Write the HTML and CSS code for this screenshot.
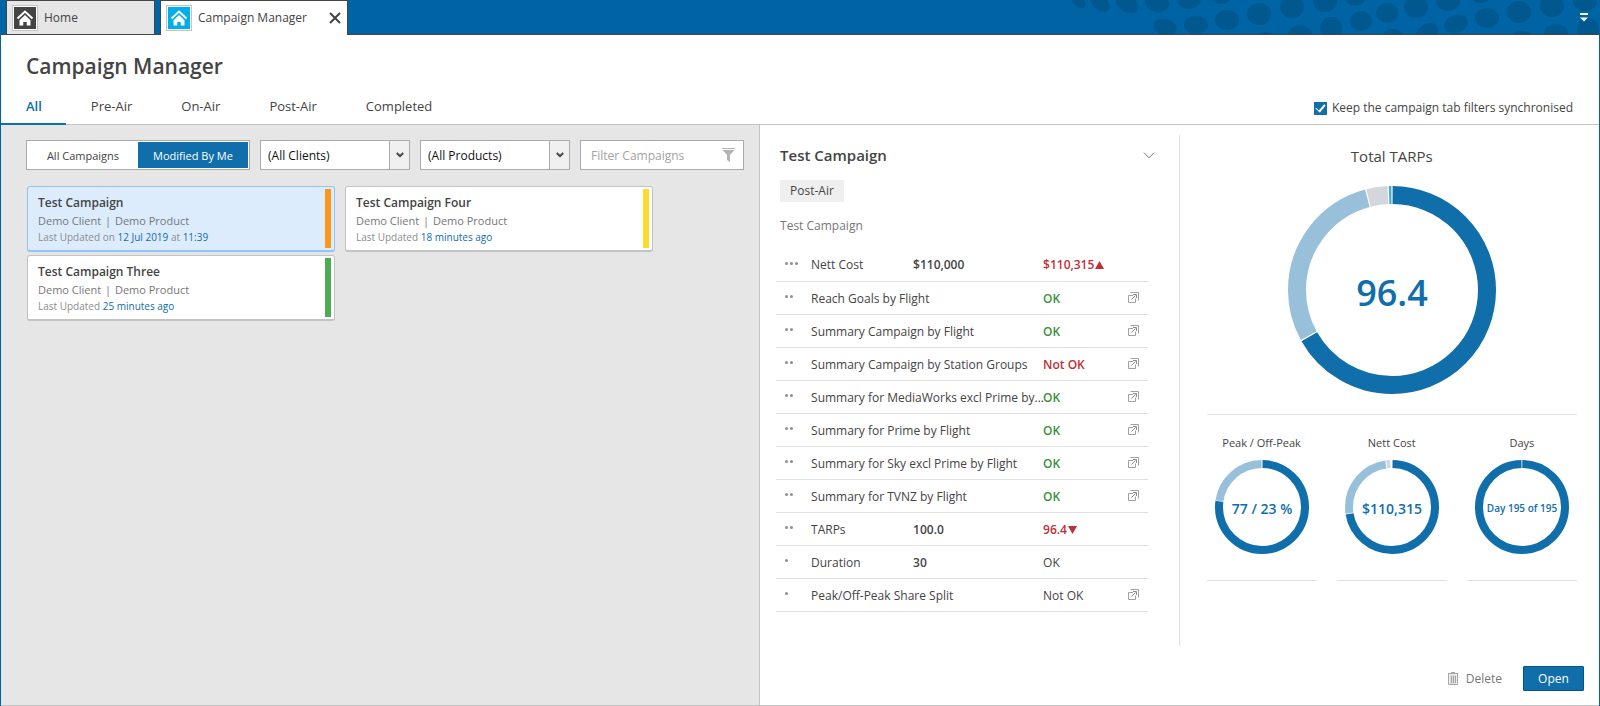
FILE: index.html
```html
<!DOCTYPE html>
<html lang="en">
<head>
  <meta charset="UTF-8">
  <meta name="viewport" content="width=device-width, initial-scale=1.0">
  <title>Campaign Manager</title>
  <link rel="stylesheet" href="styles.css">
</head>
<body>
  <svg class="sprite" aria-hidden="true">
    <symbol id="house" viewBox="0 0 22 22">
      <path d="M3.5 11.5 L11 4.5 L18.500 11.5" fill="none" stroke="#fff" stroke-width="2"/>
      <path d="M11 8 L16.5 13.2 V18.5 H12.7 V15 H9.3 V18.5 H5.5 V13.2 Z" fill="#fff"/>
    </symbol>
    <symbol id="popout" viewBox="0 0 11 11">
      <path d="M2.500 .5H10.5V8.500M5 3.5H.5V10.5H7.5V6.5" fill="none" stroke="#a0a0a0"/>
      <path d="M3.500 7.5L7.500 3.500M5 2.500H8.500V6" fill="none" stroke="#8c8c8c"/>
    </symbol>
    <symbol id="arrow" viewBox="0 0 8 6">
      <path d="M.8 1 L4 4.2 L7.2 1" fill="none" stroke="#444" stroke-width="2"/>
    </symbol>
  </svg>

  <header class="topbar">
    <svg class="dots" width="540" height="34" viewBox="1060 0 540 34" aria-hidden="true">
      <g fill="#00588f">
        <ellipse cx="1078" cy="1" rx="9" ry="5" transform="rotate(40 1078 1)"/>
        <ellipse cx="1100" cy="3" rx="11" ry="7" transform="rotate(40 1100 3)"/>
        <ellipse cx="1127" cy="4" rx="12" ry="8" transform="rotate(30 1127 4)"/>
        <ellipse cx="1157" cy="3" rx="12" ry="9" transform="rotate(15 1157 3)"/>
        <ellipse cx="1189" cy="-1" rx="12" ry="10"/>
        <ellipse cx="1221" cy="-5" rx="11" ry="9"/>
        <ellipse cx="1165" cy="27" rx="12" ry="8" transform="rotate(15 1165 27)"/>
        <ellipse cx="1196" cy="25" rx="12" ry="9"/>
        <ellipse cx="1227" cy="20" rx="12" ry="10"/>
        <ellipse cx="1259" cy="14" rx="12" ry="11"/>
        <ellipse cx="1292" cy="7" rx="12" ry="11"/>
        <ellipse cx="1325" cy="1" rx="12" ry="11"/>
        <ellipse cx="1355" cy="-4" rx="11" ry="10"/>
        <ellipse cx="1266" cy="40" rx="11" ry="8"/>
        <ellipse cx="1300" cy="35" rx="12" ry="10"/>
        <ellipse cx="1331" cy="28" rx="11" ry="11"/>
        <ellipse cx="1361" cy="21" rx="11" ry="10"/>
        <ellipse cx="1387" cy="13" rx="11" ry="10"/>
        <ellipse cx="1416" cy="7" rx="12" ry="11"/>
        <ellipse cx="1448" cy="1" rx="12" ry="10"/>
        <ellipse cx="1481" cy="-7" rx="12" ry="10"/>
        <ellipse cx="1393" cy="37" rx="10" ry="8"/>
        <ellipse cx="1427" cy="33" rx="12" ry="9" transform="rotate(-35 1427 33)"/>
        <ellipse cx="1456" cy="24" rx="12" ry="9" transform="rotate(-20 1456 24)"/>
        <ellipse cx="1487" cy="18" rx="12" ry="10"/>
        <ellipse cx="1519" cy="12" rx="12" ry="11"/>
        <ellipse cx="1552" cy="6" rx="12" ry="11"/>
        <ellipse cx="1585" cy="1" rx="12" ry="10"/>
        <ellipse cx="1522" cy="39" rx="11" ry="8"/>
        <ellipse cx="1556" cy="34" rx="12" ry="10"/>
        <ellipse cx="1588" cy="29" rx="11" ry="11"/>
      </g>
    </svg>
    <div class="window-tab">
      <span class="tab-icon"><svg width="22" height="22"><use href="#house"/></svg></span>
      <a href="#">Home</a>
    </div>
    <div class="window-tab current">
      <span class="tab-icon"><svg width="22" height="22"><use href="#house"/></svg></span>
      <a href="#">Campaign Manager</a>
      <button class="close" aria-label="Close tab">
        <svg width="12" height="12" viewBox="0 0 12 12"><path d="M1 1L11 11M11 1L1 11" stroke="#444" stroke-width="2"/></svg>
      </button>
    </div>
    <button class="overflow" aria-label="More tabs">
      <svg width="8" height="9" viewBox="0 0 8 9"><path d="M0 0H8V2H0zM0 4.5H8L4 8.5z" fill="#fff"/></svg>
    </button>
  </header>

  <main class="window">
    <div class="heading">
      <h1>Campaign Manager</h1>
      <div class="nav-row">
        <nav class="tabs">
          <a class="active" href="#">All</a>
          <a href="#">Pre-Air</a>
          <a href="#">On-Air</a>
          <a href="#">Post-Air</a>
          <a href="#">Completed</a>
        </nav>
        <label class="sync"><input type="checkbox" checked>Keep the campaign tab filters synchronised</label>
      </div>
    </div>

    <div class="content">
      <section class="list">
        <div class="filters">
          <div class="toggle">
            <button>All Campaigns</button>
            <button class="on">Modified By Me</button>
          </div>
          <div class="select">
            <select aria-label="Clients"><option>(All Clients)</option></select>
            <span class="select-arrow"><svg width="8" height="6"><use href="#arrow"/></svg></span>
          </div>
          <div class="select">
            <select aria-label="Products"><option>(All Products)</option></select>
            <span class="select-arrow"><svg width="8" height="6"><use href="#arrow"/></svg></span>
          </div>
          <div class="search">
            <input type="text" placeholder="Filter Campaigns" aria-label="Filter campaigns">
            <svg width="13" height="14" viewBox="0 0 13 14"><path d="M0 0H13V1H0zM.5 2H12.5L8 7V14L5 12V7z" fill="#b4b4b4"/></svg>
          </div>
        </div>

        <div class="cards">
          <article class="card selected">
            <div class="card-text">
              <h2>Test Campaign</h2>
              <p class="client">Demo Client <i>|</i> Demo Product</p>
              <p class="updated">Last Updated on <b>12 Jul 2019</b> at <b>11:39</b></p>
            </div>
            <span class="stripe orange"></span>
          </article>
          <article class="card">
            <div class="card-text">
              <h2>Test Campaign Four</h2>
              <p class="client">Demo Client <i>|</i> Demo Product</p>
              <p class="updated">Last Updated <b>18 minutes ago</b></p>
            </div>
            <span class="stripe yellow"></span>
          </article>
          <article class="card">
            <div class="card-text">
              <h2>Test Campaign Three</h2>
              <p class="client">Demo Client <i>|</i> Demo Product</p>
              <p class="updated">Last Updated <b>25 minutes ago</b></p>
            </div>
            <span class="stripe green"></span>
          </article>
        </div>
      </section>

      <section class="side">
        <div class="panels">
          <div class="detail">
            <div class="detail-head">
              <h2>Test Campaign</h2>
              <button class="collapse" aria-label="Collapse">
                <svg width="12" height="7" viewBox="0 0 12 7"><path d="M1 .7L6 5.8L11 .7" fill="none" stroke="#777"/></svg>
              </button>
            </div>
            <span class="tag">Post-Air</span>
            <p class="description">Test Campaign</p>

            <table class="goals">
              <colgroup>
                <col class="col-priority"><col class="col-name"><col class="col-goal"><col><col class="col-link">
              </colgroup>
              <tr>
                <td><span class="priority"><i></i><i></i><i></i></span></td>
                <td>Nett Cost</td><td class="goal">$110,000</td>
                <td class="bad">$110,315<svg width="9" height="8" viewBox="0 0 9 8"><path d="M4.5 0L9 8H0z" fill="#bf2f38"/></svg></td>
                <td></td>
              </tr>
              <tr>
                <td><span class="priority"><i></i><i></i></span></td>
                <td colspan="2">Reach Goals by Flight</td><td class="good">OK</td>
                <td><a href="#" aria-label="Open"><svg width="11" height="11"><use href="#popout"/></svg></a></td>
              </tr>
              <tr>
                <td><span class="priority"><i></i><i></i></span></td>
                <td colspan="2">Summary Campaign by Flight</td><td class="good">OK</td>
                <td><a href="#" aria-label="Open"><svg width="11" height="11"><use href="#popout"/></svg></a></td>
              </tr>
              <tr>
                <td><span class="priority"><i></i><i></i></span></td>
                <td colspan="2">Summary Campaign by Station Groups</td><td class="bad">Not OK</td>
                <td><a href="#" aria-label="Open"><svg width="11" height="11"><use href="#popout"/></svg></a></td>
              </tr>
              <tr>
                <td><span class="priority"><i></i><i></i></span></td>
                <td colspan="2">Summary for MediaWorks excl Prime by...</td><td class="good">OK</td>
                <td><a href="#" aria-label="Open"><svg width="11" height="11"><use href="#popout"/></svg></a></td>
              </tr>
              <tr>
                <td><span class="priority"><i></i><i></i></span></td>
                <td colspan="2">Summary for Prime by Flight</td><td class="good">OK</td>
                <td><a href="#" aria-label="Open"><svg width="11" height="11"><use href="#popout"/></svg></a></td>
              </tr>
              <tr>
                <td><span class="priority"><i></i><i></i></span></td>
                <td colspan="2">Summary for Sky excl Prime by Flight</td><td class="good">OK</td>
                <td><a href="#" aria-label="Open"><svg width="11" height="11"><use href="#popout"/></svg></a></td>
              </tr>
              <tr>
                <td><span class="priority"><i></i><i></i></span></td>
                <td colspan="2">Summary for TVNZ by Flight</td><td class="good">OK</td>
                <td><a href="#" aria-label="Open"><svg width="11" height="11"><use href="#popout"/></svg></a></td>
              </tr>
              <tr>
                <td><span class="priority"><i></i><i></i></span></td>
                <td>TARPs</td><td class="goal">100.0</td>
                <td class="bad">96.4<svg width="9" height="8" viewBox="0 0 9 8"><path d="M0 0H9L4.5 8z" fill="#bf2f38"/></svg></td>
                <td></td>
              </tr>
              <tr>
                <td><span class="priority"><i></i></span></td>
                <td>Duration</td><td class="goal">30</td><td>OK</td><td></td>
              </tr>
              <tr>
                <td><span class="priority"><i></i></span></td>
                <td colspan="2">Peak/Off-Peak Share Split</td><td>Not OK</td>
                <td><a href="#" aria-label="Open"><svg width="11" height="11"><use href="#popout"/></svg></a></td>
              </tr>
            </table>
          </div>

          <div class="charts">
            <div class="total">
              <h3>Total TARPs</h3>
              <svg class="donut big" width="208" height="208" viewBox="0 0 208 208">
                <g transform="rotate(-90 104 104)">
                  <circle class="dark" cx="104" cy="104" r="95" pathLength="1000" stroke-dasharray="667 333" stroke-dashoffset="-1"/>
                  <circle class="light" cx="104" cy="104" r="95" pathLength="1000" stroke-dasharray="288 712" stroke-dashoffset="-670"/>
                  <circle class="grey" cx="104" cy="104" r="95" pathLength="1000" stroke-dasharray="33 967" stroke-dashoffset="-960"/>
                  <circle class="cyan" cx="104" cy="104" r="95" pathLength="1000" stroke-dasharray="4 996" stroke-dashoffset="-995"/>
                </g>
                <text x="104" y="120">96.4</text>
              </svg>
            </div>
            <div class="small-charts">
              <div class="small-chart">
                <h4>Peak / Off-Peak</h4>
                <svg class="donut" width="94" height="94" viewBox="0 0 94 94">
                  <g transform="rotate(-90 47 47)">
                    <circle class="dark" cx="47" cy="47" r="43" pathLength="1000" stroke-dasharray="769 231" stroke-dashoffset="-2"/>
                    <circle class="light" cx="47" cy="47" r="43" pathLength="1000" stroke-dasharray="225 775" stroke-dashoffset="-773"/>
                  </g>
                  <text x="47" y="54">77 / 23 %</text>
                </svg>
              </div>
              <div class="small-chart">
                <h4>Nett Cost</h4>
                <svg class="donut" width="94" height="94" viewBox="0 0 94 94">
                  <g transform="rotate(-90 47 47)">
                    <circle class="dark" cx="47" cy="47" r="43" pathLength="1000" stroke-dasharray="722 278" stroke-dashoffset="-2"/>
                    <circle class="light" cx="47" cy="47" r="43" pathLength="1000" stroke-dasharray="250 750" stroke-dashoffset="-727"/>
                    <circle class="grey" cx="47" cy="47" r="43" pathLength="1000" stroke-dasharray="14 986" stroke-dashoffset="-980"/>
                  </g>
                  <text x="47" y="54">$110,315</text>
                </svg>
              </div>
              <div class="small-chart">
                <h4>Days</h4>
                <svg class="donut fine" width="94" height="94" viewBox="0 0 94 94">
                  <g transform="rotate(-90 47 47)">
                    <circle class="dark" cx="47" cy="47" r="43" pathLength="1000" stroke-dasharray="997 3" stroke-dashoffset="-1"/>
                  </g>
                  <text x="47" y="52">Day 195 of 195</text>
                </svg>
              </div>
            </div>
          </div>
        </div>

        <footer class="actions">
          <button class="delete">
            <svg width="10" height="13" viewBox="0 0 10 13">
              <path d="M1.500 2.500H8.500V12.500H1.500z" fill="#ddd"/>
              <path d="M0 1.500H10M3 .5H7M.5 2V12.500H9.500V2M3.500 4V11M5.500 4V11M7.500 4V11" fill="none" stroke="#a6a6a6"/>
            </svg>
            Delete
          </button>
          <button class="open">Open</button>
        </footer>
      </section>
    </div>
  </main>
</body>
</html>
```
FILE: styles.css
```css
* {
    box-sizing: border-box;
}

body {
    margin: 0;
    min-height: 100vh;
    display: flex;
    flex-direction: column;
    font-family: "Open Sans", "Noto Sans", sans-serif;
    font-size: 12px;
    line-height: 16px;
    color: #444;
    background-color: #0063a3;
}

h1, h2, h3, h4, p {
    margin: 0;
}

button, input, select {
    font: inherit;
    color: inherit;
}

button {
    padding: 0;
    border: 0;
    background: none;
    cursor: pointer;
}

a {
    color: inherit;
    text-decoration: none;
}

svg {
    display: block;
    flex: none;
}

.sprite {
    position: absolute;
    width: 0;
    height: 0;
}

/* window tabs */
.topbar {
    position: relative;
    display: flex;
    height: 34px;
    padding: 0 12px 0 6px;
    gap: 5px;
}

.dots {
    position: absolute;
    top: 0;
    right: 0;
}

.window-tab {
    display: flex;
    align-items: center;
    gap: 6px;
    width: 149px;
    padding-left: 5px;
    background-color: #e6e6e6;
    border: 1px solid #444;
    border-bottom: 0;
}

.window-tab.current {
    width: 188px;
    padding-right: 6px;
    margin-bottom: -1px;
    background-color: #fff;
    z-index: 1;
}

.tab-icon {
    padding: 1px;
    border: 1px solid #c4c4c4;
    background-color: #fff;
}

.tab-icon svg {
    background-color: #444;
}

.current .tab-icon svg {
    background-color: #00aeea;
}

.close {
    margin-left: auto;
}

.overflow {
    position: relative;
    margin-left: auto;
}

/* page */
.window {
    flex: 1;
    display: flex;
    flex-direction: column;
    margin: 0 1px;
    border-top: 1px solid #444;
    border-bottom: 1px solid #c3c3c3;
    background-color: #fff;
}

.heading {
    border-bottom: 1px solid #c3c3c3;
}

h1 {
    padding: 16px 25px 15px;
    font-size: 21px;
    line-height: 30px;
    font-weight: 600;
}

.nav-row {
    display: flex;
    justify-content: space-between;
    align-items: flex-end;
    padding-right: 26px;
}

.tabs {
    display: flex;
    font-size: 13px;
    line-height: 20px;
    margin-bottom: -1px;
}

.tabs a {
    padding: 0 24px 7px 25px;
    border-bottom: 2px solid transparent;
}

.tabs .active {
    color: #106eaa;
    font-weight: 600;
    border-color: #106eaa;
}

.sync {
    display: flex;
    align-items: center;
    gap: 5px;
    padding-bottom: 8px;
}

.sync input {
    appearance: none;
    width: 13px;
    height: 13px;
    margin: 0;
    background-color: #106eaa;
    display: grid;
    place-items: center;
}

.sync input:checked::before {
    content: "";
    width: 8px;
    height: 4px;
    margin-bottom: 3px;
    border-left: 1px solid #fff;
    border-bottom: 2px solid #fff;
    transform: rotate(-50deg);
}

.content {
    flex: 1;
    display: grid;
    grid-template-columns: 475fr 525fr;
}

/* campaign list */
.list {
    padding: 15px 15px 15px 25px;
    background-color: #e6e6e6;
    border-right: 1px solid #c3c3c3;
}

.filters {
    display: grid;
    grid-template-columns: 224fr 150fr 150fr 164fr;
    gap: 10px;
}

.toggle, .select, .search {
    display: flex;
    min-width: 0;
    height: 30px;
    background-color: #fff;
    border: 1px solid #ababab;
}

.toggle {
    padding: 1px;
    font-size: 11px;
}

.toggle button {
    flex: 1;
    padding-top: 2px;
    white-space: nowrap;
}

.toggle .on {
    color: #fff;
    background-color: #106eaa;
}

.select {
    position: relative;
}

.select select {
    appearance: none;
    width: 100%;
    padding: 2px 27px 0 7px;
    border: 0;
    color: #111;
    background: none;
}

.select-arrow {
    position: absolute;
    top: 0;
    right: 0;
    bottom: 0;
    width: 20px;
    display: grid;
    place-items: center;
    background-color: #f0f0f0;
    border-left: 1px solid #ababab;
    pointer-events: none;
}

.search {
    align-items: center;
    padding: 0 8px 0 10px;
}

.search input {
    flex: 1;
    min-width: 0;
    padding: 2px 0 0;
    border: 0;
    background: none;
}

.search input::placeholder {
    color: #a3a3a3;
}

.cards {
    display: flex;
    flex-wrap: wrap;
    gap: 3px 10px;
    padding: 16px 1px 0;
}

.card {
    display: flex;
    justify-content: space-between;
    width: 308px;
    padding: 2px 3px 2px 10px;
    background-color: #fff;
    border: 1px solid #c3c3c3;
    border-bottom-width: 2px;
    border-radius: 3px;
}

.card.selected {
    background-color: #dcecfd;
    border-color: #8fc5fb;
}

.card-text {
    padding: 5px 0 3px;
}

.card h2 {
    font-size: 12px;
    line-height: 18px;
    font-weight: 600;
}

.client {
    font-size: 11px;
    line-height: 18px;
    color: #777;
}

.client i {
    margin: 0 1px;
    font-style: normal;
}

.updated {
    font-size: 10px;
    line-height: 14px;
    color: #8c8c8c;
}

.updated b {
    font-weight: 400;
    color: #106eaa;
}

.stripe {
    width: 6px;
    height: 59px;
}

.orange {
    background-color: #ff941c;
}

.yellow {
    background-color: #ffd92b;
}

.green {
    background-color: #4dac50;
}

/* selected campaign */
.side {
    display: flex;
    flex-direction: column;
}

.panels {
    flex: 1;
    display: grid;
    grid-template-columns: 1fr 1fr;
    padding-top: 10px;
}

.detail {
    padding: 9px 31px 0 16px;
    border-right: 1px solid #e0e0e0;
}

.detail-head {
    display: flex;
    justify-content: space-between;
    align-items: center;
    padding-left: 4px;
}

.collapse {
    margin-right: -7px;
}

.detail h2 {
    font-size: 15px;
    line-height: 22px;
    font-weight: 600;
}

.tag {
    display: inline-block;
    margin: 14px 4px 0;
    padding: 3px 10px;
    background-color: #efefef;
    border-radius: 1px;
}

.description {
    padding: 16px 4px 14px;
    color: #777;
}

.goals {
    width: 100%;
    table-layout: fixed;
    border-collapse: collapse;
}

.col-priority {
    width: 35px;
}

.col-name {
    width: 102px;
}

.col-goal {
    width: 130px;
}

.col-link {
    width: 20px;
}

.goals td {
    height: 33px;
    padding: 2px 0 0;
    white-space: nowrap;
    border-bottom: 1px solid #e0e0e0;
}

.goals td:first-child, .goals td:last-child {
    padding: 0;
}

.goals .goal, .goals .good, .goals .bad {
    font-weight: 600;
}

.goals .good {
    color: #3a913b;
}

.goals .bad {
    color: #bf2f38;
}

.bad svg {
    display: inline-block;
    margin-left: 1px;
}

.priority {
    display: flex;
    gap: 2px;
    padding: 0 0 2px 9px;
}

.priority i {
    width: 3px;
    height: 3px;
    border-radius: 50%;
    background-color: #8f8f8f;
}

/* charts */
.charts {
    padding: 9px 22px 0 27px;
}

.total {
    display: flex;
    flex-direction: column;
    align-items: center;
    gap: 18px;
    padding-bottom: 20px;
    border-bottom: 1px solid #e0e0e0;
}

.total h3 {
    font-size: 15px;
    line-height: 24px;
    font-weight: 400;
}

.donut circle {
    fill: none;
    stroke-width: 8;
}

.donut.big circle {
    stroke-width: 18;
}

.donut .dark {
    stroke: #106eaa;
}

.donut .light {
    stroke: #98c0da;
}

.donut .grey {
    stroke: #d3d7dc;
}

.donut .cyan {
    stroke: #41acd3;
}

.donut text {
    font-size: 14px;
    font-weight: 600;
    text-anchor: middle;
    fill: #106eaa;
}

.donut.big text {
    font-size: 36px;
}

.donut.fine text {
    font-size: 10px;
}

.small-charts {
    display: grid;
    grid-template-columns: repeat(3, 1fr);
    gap: 20px;
    padding-top: 20px;
}

.small-chart {
    display: flex;
    flex-direction: column;
    align-items: center;
    gap: 9px;
    padding-bottom: 26px;
    border-bottom: 1px solid #e0e0e0;
}

.small-chart h4 {
    font-size: 11px;
    line-height: 16px;
    font-weight: 400;
}

.actions {
    display: flex;
    justify-content: flex-end;
    align-items: center;
    gap: 21px;
    padding: 20px 15px 14px;
}

.delete {
    display: flex;
    align-items: center;
    gap: 8px;
    color: #777;
}

.open {
    width: 61px;
    height: 25px;
    color: #fff;
    background-color: #106eaa;
    border: 1px solid #075487;
    border-radius: 1px;
}
```
